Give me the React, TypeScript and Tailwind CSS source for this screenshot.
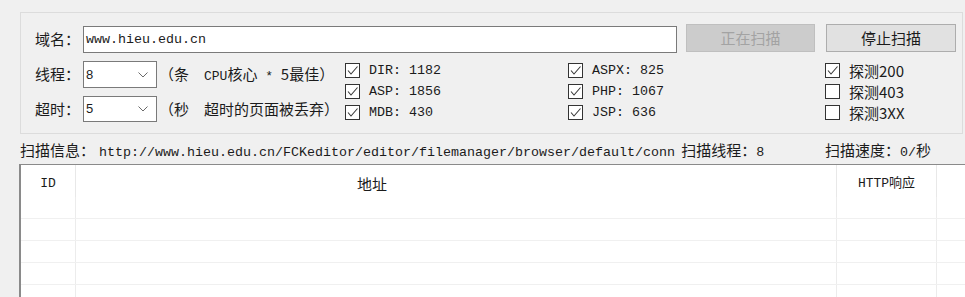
import React from 'react';

const mono = "font-['Liberation_Mono','Noto_Sans_CJK_SC',monospace]";
const cjk = "font-['Noto_Sans_CJK_SC',sans-serif]";

const CheckBox: React.FC<{ checked: boolean; label: React.ReactNode }> = ({ checked, label }) => (
  <div className="flex h-[21px] items-center">
    <div className="w-[15px] h-[15px] border border-[#333333] bg-white flex items-center justify-center">
      {checked && (
        <svg width="13" height="13" viewBox="0 0 13 13">
          <polyline points="2,6.5 5,10 11.5,2.5" fill="none" stroke="#3a3a3a" strokeWidth="1.1" />
        </svg>
      )}
    </div>
    <span className="ml-[9px] leading-[20px]">{label}</span>
  </div>
);

const Select: React.FC<{ value: string; h: string }> = ({ value, h }) => (
  <div className={`w-[74px] ${h} border border-[#7a7a7a] bg-white flex items-center justify-between pl-[2px] pr-[8px]`}>
    <span className="font-['Liberation_Sans',sans-serif] text-[13px]">{value}</span>
    <svg width="10" height="6" viewBox="0 0 10 6">
      <polyline points="0.5,0.5 5,5 9.5,0.5" fill="none" stroke="#6a6a6a" strokeWidth="1" />
    </svg>
  </div>
);

const columns = [
  { w: 'w-[55px]', label: <span className={`${mono} text-[13px]`}>ID</span>, cls: 'justify-center' },
  { w: 'w-[761px]', label: <span className={`${cjk} text-[15px]`}>地址</span>, cls: 'pl-[281px]' },
  { w: 'w-[100px]', label: <span className={`${mono} text-[13px]`}>HTTP响应</span>, cls: 'justify-center' },
];

export default function App() {
  return (
    <div className={`w-[965px] h-[297px] overflow-hidden bg-[#f0f0f0] pt-[12px] pl-[19px] text-[#1b1b1b] ${cjk}`}>
      {/* settings group */}
      <div className="ml-px w-[943px] h-[122px] border border-[#dcdcdc] pl-[14px] pt-[11px]">
        <div className="flex h-[29px]">
          <span className="w-[48px] text-[15px] leading-[29px]">域名：</span>
          <div className={`w-[594px] h-[27px] mt-[2px] border border-[#7a7a7a] bg-white pl-[2px] ${mono} text-[13.33px] leading-[25px]`}>
            www.hieu.edu.cn
          </div>
          <button className="ml-[9px] w-[129px] h-[28px] bg-[#cccccc] border border-[#bfbfbf] text-[#a3a3a3] text-[15px]">
            正在扫描
          </button>
          <button className="ml-[11px] w-[130px] h-[28px] bg-[#e1e1e1] border border-[#adadad] text-[15px]">
            停止扫描
          </button>
        </div>

        <div className="flex mt-[8px]">
          <div className="w-[310px] flex flex-col gap-[8px] text-[15px] whitespace-pre">
            <div className="flex items-center h-[27px]">
              <span className="w-[48px]">线程：</span>
              <Select value="8" h="h-[27px]" />
              <span className="ml-[2px]">
                （条　<span className={`${mono} text-[13px]`}>CPU</span>核心<span className={`${mono} text-[13px]`}> * </span>5最佳）
              </span>
            </div>
            <div className="flex items-center h-[26px]">
              <span className="w-[48px]">超时：</span>
              <Select value="5" h="h-[26px]" />
              <span className="ml-[2px]">（秒　超时的页面被丢弃）</span>
            </div>
          </div>

          <div className={`w-[223px] flex flex-col -mt-px ${mono} text-[13.33px]`}>
            <CheckBox checked label="DIR: 1182" />
            <CheckBox checked label="ASP: 1856" />
            <CheckBox checked label="MDB: 430" />
          </div>
          <div className={`w-[257px] flex flex-col -mt-px ${mono} text-[13.33px]`}>
            <CheckBox checked label="ASPX: 825" />
            <CheckBox checked label="PHP: 1067" />
            <CheckBox checked label="JSP: 636" />
          </div>
          <div className="flex flex-col -mt-px text-[15px]">
            <CheckBox checked label="探测200" />
            <CheckBox checked={false} label="探测403" />
            <CheckBox checked={false} label="探测3XX" />
          </div>
        </div>
      </div>

      {/* scan info */}
      <div className="h-[30px] flex items-end pb-[1px] pl-px text-[15px] leading-[20px] whitespace-nowrap">
        <div className="w-[805px]">
          扫描信息：<span className={`${mono} text-[13.33px] pl-[4px] pr-[3px]`}>http://www.hieu.edu.cn/FCKeditor/editor/filemanager/browser/default/conn</span> 扫描线程：<span className={`${mono} text-[13.33px]`}>8</span>
        </div>
        <div>
          扫描速度：<span className={`${mono} text-[13.33px]`}>0/</span>秒
        </div>
      </div>

      {/* result table */}
      <div className="w-[960px] h-[140px] bg-white border-t border-l-2 border-[#8a8a8a]">
        <div className="flex h-[32px]">
          {columns.map((c, i) => (
            <div key={i} className={`${c.w} flex pt-[9px] leading-[20px] border-r border-[#e8e8e8] ${c.cls}`}>
              {c.label}
            </div>
          ))}
        </div>
        {[0, 1, 2, 3, 4].map((r) => (
          <div key={r} className="flex h-[22px] border-b border-[#f0f0f0]">
            {columns.map((c, i) => (
              <div key={i} className={`${c.w} border-r border-[#ececec]`} />
            ))}
          </div>
        ))}
      </div>
    </div>
  );
}
